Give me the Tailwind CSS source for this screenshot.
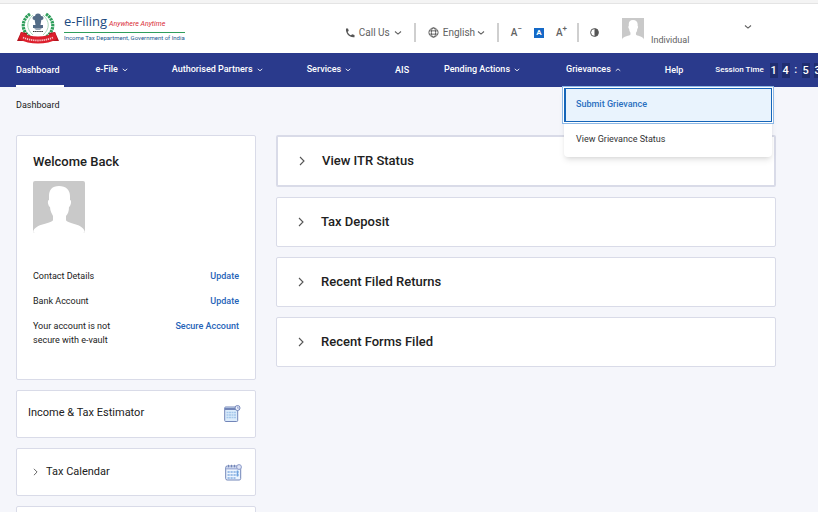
<!DOCTYPE html>
<html lang="en">

<head>
    <meta charset="UTF-8">
    <meta name="viewport" content="width=device-width, initial-scale=1.0">
    <title>e-Filing Dashboard</title>
    <script src="https://cdn.jsdelivr.net/npm/@tailwindcss/browser@4"></script>
</head>

<body class="h-screen overflow-hidden bg-[#f5f6fb] font-['Roboto',sans-serif] text-[#212121]">
    <!-- shared icons -->
    <svg class="hidden">
        <symbol id="down" viewBox="0 0 8 6"><path d="M1 1.5l3 2.6 3-2.6" fill="none" stroke="currentColor" stroke-width="1.1" /></symbol>
        <symbol id="up" viewBox="0 0 8 6"><path d="M1 4.1l3-2.6 3 2.6" fill="none" stroke="currentColor" stroke-width="1.1" /></symbol>
        <symbol id="right" viewBox="0 0 6 10"><path d="M1 1l4 4-4 4" fill="none" stroke="currentColor" stroke-width="1.1" /></symbol>
        <symbol id="avatar" viewBox="0 0 52 52">
            <path d="M0 0h52v52H0z" fill="#c9c9c9" />
            <path d="M26 5c-7 0-10 4-10 10v4c-2 0-1 6 1 7 0 4 2 7 3 9v4c-1 4-18 3-20 12v1h52v-1c-2-9-18-8-19-12v-4c2-2 3-5 3-9 2-1 3-7 1-7v-4c0-6-4-10-11-10z" fill="#fff" />
        </symbol>
    </svg>

    <div class="h-1 border-b border-[#e4e4e4] bg-[#f4f4f4]"></div>

    <header class="flex h-[49px] items-center bg-white pr-[66px] pl-4 text-[10px] text-[#616161]">
        <a href="#" class="flex shrink-0 items-center gap-1 pb-0.5">
            <svg class="h-8 w-11" viewBox="0 0 44 32">
                <path d="M14 2c-9 6-9 17 0 23M30 2c9 6 9 17 0 23" fill="none" stroke="#2f9e5b" stroke-width="3.2" stroke-dasharray="2.4 .7" />
                <path d="M17 3c-7 6-7 14 0 20M27 3c7 6 7 14 0 20" fill="none" stroke="#a8d9ba" stroke-width="1" />
                <g fill="#536b86">
                    <circle cx="22" cy="4.500" r="3" />
                    <circle cx="18.500" cy="6" r="2" />
                    <circle cx="25.500" cy="6" r="2" />
                    <path d="M18.500 7h7l-1 6h-5zM17 13h10v3H17z" />
                    <path d="M18 16h8l-2 2h-4z" opacity=".6" />
                </g>
                <path d="M17 19.500h10" stroke="#333" stroke-width="1.200" stroke-dasharray="1.500 .6" />
                <path d="M1 29l4-9 6 1-2 8zM43 29l-4-9-6 1 2 8z" fill="#b3151f" />
                <path d="M5 20c9 6 25 6 34 0l2 7c-10 6-28 6-38 0z" fill="#dc1f2c" />
                <path d="M7 25.500c9 4 21 4 30 0" fill="none" stroke="#fff" stroke-width="1.800" stroke-dasharray="1.300 .8" opacity=".75" />
            </svg>
            <span class="block whitespace-nowrap">
                <span class="flex items-baseline gap-0.5 leading-4">
                    <span class="font-['Open_Sans',sans-serif] text-[13px] text-[#1c4a80]">e-Filing</span>
                    <i class="text-[7px] text-[#d92b35]">Anywhere Anytime</i>
                </span>
                <span class="block h-px bg-[#2f9e5b]"></span>
                <span class="block text-[6px] leading-[10px] text-[#24588f]">Income Tax Department, Government of India</span>
            </span>
        </a>

        <div class="mt-2 ml-auto flex shrink-0 items-center">
            <button class="flex items-center gap-1">
                <svg class="size-2.5" viewBox="0 0 10 10"><path d="M1 .5h2l.7 2.200L2.600 4c.8 1.500 1.800 2.500 3.300 3.300L7.200 6.200l2.300.7v2.300C4.700 10 .3 5.600 1 .5z" fill="#555" /></svg>
                Call Us
                <svg class="h-1.5 w-2"><use href="#down" /></svg>
            </button>
            <span class="ml-3 h-[19px] w-0.5 bg-[#cfcfcf]"></span>
            <label class="relative ml-3 flex items-center gap-1">
                <svg class="size-[11px]" viewBox="0 0 12 12" fill="none" stroke="#555" stroke-width="1"><circle cx="6" cy="6" r="5" /><ellipse cx="6" cy="6" rx="2.300" ry="5" /><path d="M1.300 4.200h9.400M1.300 7.800h9.400" /></svg>
                <select aria-label="Language" class="w-[42px] appearance-none bg-transparent">
                    <option>English</option>
                </select>
                <svg class="pointer-events-none absolute right-0 h-1.5 w-2"><use href="#down" /></svg>
            </label>
            <span class="ml-3 h-[19px] w-0.5 bg-[#cfcfcf]"></span>
            <button aria-label="Decrease text" class="ml-3 flex font-medium">A<span class="-mt-0.5 text-[8px] leading-3">−</span></button>
            <button aria-label="Normal text" class="ml-3 h-[10px] w-[10px] bg-[#1569c7] text-center text-[8px] leading-[10px] font-bold text-white">A</button>
            <button aria-label="Increase text" class="ml-3 flex font-medium">A<span class="-mt-0.5 text-[8px] leading-3">+</span></button>
            <span class="ml-2.5 h-[19px] w-0.5 bg-[#cfcfcf]"></span>
            <button aria-label="Contrast" class="ml-[11px]">
                <svg class="size-[9px]" viewBox="0 0 9 9"><circle cx="4.500" cy="4.500" r="3.900" fill="#fff" stroke="#555" /><path d="M4.500.6a3.900 3.900 0 010 7.800z" fill="#555" /></svg>
            </button>
            <button class="-mt-0.5 ml-[23px] flex h-7 w-[130px] items-start gap-[7px] text-[9px]">
                <svg class="size-[22px]"><use href="#avatar" /></svg>
                <span class="self-end leading-3">Individual</span>
                <svg class="mt-1.5 ml-auto h-1.5 w-2"><use href="#down" /></svg>
            </button>
        </div>
    </header>

    <nav class="flex h-[34px] gap-8 bg-[#2a3a8c] pl-4 text-[9px] font-medium whitespace-nowrap text-white *:shrink-0">
        <a href="#" class="flex items-center border-b-2 border-white pt-1 pr-1">Dashboard</a>
        <button class="mr-3 flex items-center gap-1">e-File <svg class="h-1.5 w-1.5"><use href="#down" /></svg></button>
        <button class="mr-3 flex items-center gap-1">Authorised Partners <svg class="h-1.5 w-1.5"><use href="#down" /></svg></button>
        <button class="mr-3 flex items-center gap-1">Services <svg class="h-1.5 w-1.5"><use href="#down" /></svg></button>
        <a href="#" class="mr-[3px] flex items-center pt-0.5">AIS</a>
        <button class="mr-3 flex items-center gap-1">Pending Actions <svg class="h-1.5 w-1.5"><use href="#down" /></svg></button>
        <div class="relative flex">
            <button class="flex items-center gap-1 border-b border-white pr-3 pl-0.5">Grievances <svg class="h-1.5 w-1.5"><use href="#up" /></svg></button>
            <div class="absolute top-full left-0 z-10 w-[208px] rounded-b bg-white pt-px font-normal text-[#333] shadow-md">
                <a href="#" class="flex h-[34px] items-center border border-l-2 border-[#1565b8] bg-[#e9f3fd] pl-2.5 font-medium text-[#2a6fc0] outline-1 outline-offset-1 outline-[#8db8e6] ring-1 ring-white">Submit Grievance</a>
                <a href="#" class="flex h-[35px] items-center pl-3">View Grievance Status</a>
            </div>
        </div>
        <a href="#" class="flex items-center pt-0.5">Help</a>
        <div class="flex items-center gap-1 text-[8px]">
            <span class="mr-0.5">Session Time</span>
            <span class="w-2 bg-[#1f2d70] text-center text-[11px] leading-[15px]">1</span>
            <span class="w-2 bg-[#1f2d70] text-center text-[11px] leading-[15px]">4</span>
            <span class="w-1 text-center text-[11px]">:</span>
            <span class="w-2 bg-[#1f2d70] text-center text-[11px] leading-[15px]">5</span>
            <span class="w-2 bg-[#1f2d70] text-center text-[11px] leading-[15px]">3</span>
        </div>
    </nav>

    <p class="px-4 pt-3 text-[9px] leading-3">Dashboard</p>

    <main class="flex items-start gap-5 pt-6 pr-[42px] pl-4">
        <aside class="flex w-60 shrink-0 flex-col gap-2.5">
            <section class="h-[245px] rounded-xs border border-[#d9dbe8] bg-white px-4 pt-4">
                <h2 class="text-[13px] leading-5 font-medium">Welcome Back</h2>
                <svg class="mt-[9px] size-[52px] rounded-xs"><use href="#avatar" /></svg>
                <div class="mt-9 flex flex-col gap-[11px] text-[9px] leading-[14px]">
                    <div class="flex justify-between"><span>Contact Details</span><a href="#" class="font-medium text-[#2563b8]">Update</a></div>
                    <div class="flex justify-between"><span>Bank Account</span><a href="#" class="font-medium text-[#2563b8]">Update</a></div>
                    <div class="flex justify-between"><span class="w-24">Your account is not secure with e-vault</span><a href="#" class="font-medium text-[#2563b8]">Secure Account</a></div>
                </div>
            </section>

            <section class="flex h-12 items-center justify-between rounded-xs border border-[#d9dbe8] bg-white pr-3.5 pb-px pl-[11px]">
                <h3 class="text-[11px]">Income &amp; Tax Estimator</h3>
                <svg class="size-[17px]" viewBox="0 0 17 17">
                    <rect x=".7" y="2" width="13" height="14.500" rx="1" fill="#dcecfb" stroke="#7285b8" />
                    <path d="M1 4h12.500" stroke="#7285b8" stroke-width="2" />
                    <path d="M2.500 7.500h10M2.500 10h10M2.500 12.500h10" stroke="#a5c8ec" stroke-width="1.500" stroke-dasharray="2 .5" />
                    <circle cx="13.500" cy="3" r="2.500" fill="#eef3ff" stroke="#7285b8" />
                    <path d="M13 2h1v2" stroke="#7285b8" stroke-width=".7" fill="none" />
                </svg>
            </section>

            <section class="flex h-12 items-center rounded-xs border border-[#d9dbe8] bg-white pr-[13px] pl-4">
                <button class="flex items-center gap-2 text-[11px]"><svg class="h-2 w-[5px] text-[#555]"><use href="#right" /></svg>Tax Calendar</button>
                <svg class="ml-auto size-[17px]" viewBox="0 0 17 17">
                    <rect x=".7" y="2" width="15" height="14" rx="1.500" fill="#edf5fe" stroke="#7285b8" />
                    <path d="M1 4.500h14.500" stroke="#aab7dc" stroke-width="2" />
                    <path d="M3.500.8v2.500M6.500.8v2.500M9.500.8v2.500" stroke="#7285b8" />
                    <path d="M2.500 8h11.500M2.500 11h11.500M2.500 14h8" stroke="#9dbfe8" stroke-width="2" stroke-dasharray="2.200 .8" />
                    <path d="M12.500 6.500v6" stroke="#6fa3dc" stroke-width="1.500" />
                    <circle cx="14" cy="3" r="2.400" fill="#dfe5f7" stroke="#8d9bc9" />
                </svg>
            </section>

            <section class="h-12 rounded-xs border border-[#d9dbe8] bg-white"></section>
        </aside>

        <div class="flex flex-1 flex-col gap-2.5 text-[13px] font-medium">
            <button class="flex h-[52px] items-center gap-[17px] rounded-xs border-2 border-[#d9dbe8] bg-white px-[21px]"><svg class="h-2.5 w-1.5 text-[#555]"><use href="#right" /></svg>View ITR Status</button>
            <button class="flex h-[50px] items-center gap-[17px] rounded-xs border border-[#d9dbe8] bg-white px-[21px]"><svg class="h-2.5 w-1.5 text-[#555]"><use href="#right" /></svg>Tax Deposit</button>
            <button class="flex h-[50px] items-center gap-[17px] rounded-xs border border-[#d9dbe8] bg-white px-[21px]"><svg class="h-2.5 w-1.5 text-[#555]"><use href="#right" /></svg>Recent Filed Returns</button>
            <button class="flex h-[50px] items-center gap-[17px] rounded-xs border border-[#d9dbe8] bg-white px-[21px]"><svg class="h-2.5 w-1.5 text-[#555]"><use href="#right" /></svg>Recent Forms Filed</button>
        </div>
    </main>
</body>

</html>
